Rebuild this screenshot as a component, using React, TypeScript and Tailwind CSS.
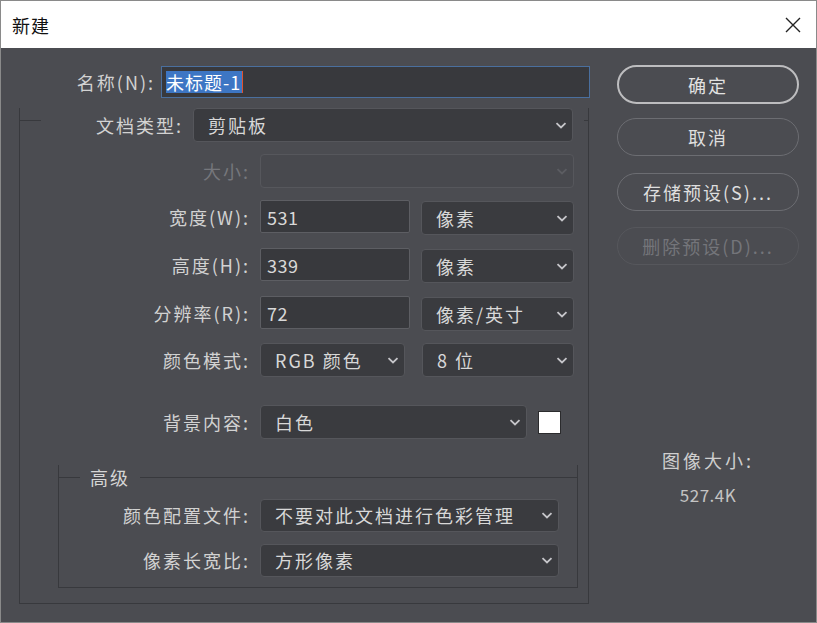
import React from 'react';

const font = "font-['Noto_Sans_CJK_SC',sans-serif]";

function Chevron({ dim }: { dim?: boolean }) {
  return (
    <svg
      width="12"
      height="7"
      viewBox="0 0 12 7"
      className={dim ? 'text-[#5c5d62]' : 'text-[#c6c6ca]'}
    >
      <polyline points="1.5,1.2 6,5.5 10.5,1.2" fill="none" stroke="currentColor" strokeWidth="1.8" />
    </svg>
  );
}

function Select({
  value,
  className,
  disabled,
}: {
  value?: string;
  className: string;
  disabled?: boolean;
}) {
  return (
    <div
      className={`flex items-center justify-between rounded-[4px] border pl-[14px] pr-[5px] ${
        disabled ? 'border-[#56575c] bg-[#48494e]' : 'border-[#55565b] bg-[#3a3b3f]'
      } ${className}`}
    >
      <span className="text-[18px] leading-[24px] tracking-[2px] text-[#d8d8d8]">{value}</span>
      <Chevron dim={disabled} />
    </div>
  );
}

function Field({ value, className }: { value: string; className: string }) {
  return (
    <div
      className={`flex items-center rounded-[2px] border border-[#5d5e63] bg-[#38393d] pl-[6px] ${className}`}
    >
      <span className="text-[18px] leading-[24px] tracking-[0.5px] text-[#d8d8d8]">{value}</span>
    </div>
  );
}

function Label({ text, className, disabled }: { text: string; className: string; disabled?: boolean }) {
  return (
    <div
      className={`flex h-[34px] items-center justify-end text-[18px] leading-[24px] tracking-[2px] ${
        disabled ? 'text-[#76777c]' : 'text-[#d2d2d2]'
      } ${className}`}
    >
      {text}
    </div>
  );
}

function PillButton({
  text,
  variant,
  className,
}: {
  text: string;
  variant: 'primary' | 'normal' | 'disabled';
  className: string;
}) {
  const styles = {
    primary: 'border-2 border-[#bdbdbf] text-[#e2e2e2]',
    normal: 'border-[1.5px] border-[#6c6d72] text-[#dedede]',
    disabled: 'border-[1.5px] border-[#56575c] text-[#74757a]',
  }[variant];
  return (
    <div
      className={`flex w-[182px] items-center justify-center rounded-full text-[18px] leading-[24px] tracking-[2px] ${styles} ${className}`}
    >
      {text}
    </div>
  );
}

export default function App() {
  return (
    <div className={`flex h-[623px] w-[817px] flex-col border border-[#8a8a8a] bg-[#4b4c51] ${font}`}>
      {/* title bar */}
      <div className="flex h-[47px] items-center justify-between bg-white pl-[11px] pr-[15px]">
        <span className="text-[18px] leading-[24px] tracking-[1px] text-[#111]">新建</span>
        <svg width="16" height="16" viewBox="0 0 16 16">
          <path d="M1 1 L15 15 M15 1 L1 15" stroke="#222" strokeWidth="1.4" fill="none" />
        </svg>
      </div>

      <div className="flex flex-1">
        {/* left column */}
        <div className="w-[589px]">
          <div className="mt-[18px] flex items-center">
            <div className="w-[154px] text-right text-[18px] leading-[24px] tracking-[2px] text-[#d2d2d2]">
              名称(N):
            </div>
            <div className="ml-[6px] flex h-[32px] w-[429px] items-center border border-[#4a6f9e] bg-[#38393d] pl-[4px]">
              <span className="bg-[#3d76c4] pr-[1px] text-[18px] leading-[22px] tracking-[1px] text-white">
                未标题-1
              </span>
              <span className="h-[22px] w-px bg-[#e0522e]" />
            </div>
          </div>

          {/* main group */}
          <div className="ml-[18px] mt-[22px] w-[570px] border-x border-b border-[#38393d] pb-[15px]">
            <div className="-mt-[12px] flex items-start">
              <div className="mt-[12px] h-px w-[21px] bg-[#38393d]" />
              <Label text="文档类型:" className="w-[142px]" />
              <Select value="剪贴板" className="ml-[10px] h-[34px] w-[380px]" />
              <div className="ml-[11px] mt-[12px] h-px w-[4px] bg-[#38393d]" />
            </div>

            <div className="mt-[12px] flex">
              <Label text="大小:" className="w-[230px]" disabled />
              <Select className="ml-[10px] h-[34px] w-[314px]" disabled />
            </div>

            <div className="mt-[12px] flex items-start">
              <Label text="宽度(W):" className="w-[230px]" />
              <Field value="531" className="ml-[10px] h-[33px] w-[150px]" />
              <Select value="像素" className="ml-[11px] mt-[1px] h-[34px] w-[153px]" />
            </div>

            <div className="mt-[13px] flex items-start">
              <Label text="高度(H):" className="w-[230px]" />
              <Field value="339" className="ml-[10px] h-[33px] w-[150px]" />
              <Select value="像素" className="ml-[11px] mt-[1px] h-[34px] w-[153px]" />
            </div>

            <div className="mt-[13px] flex items-start">
              <Label text="分辨率(R):" className="w-[230px]" />
              <Field value="72" className="ml-[10px] h-[33px] w-[150px]" />
              <Select value="像素/英寸" className="ml-[11px] mt-[1px] h-[34px] w-[153px]" />
            </div>

            <div className="mt-[12px] flex">
              <Label text="颜色模式:" className="w-[230px]" />
              <Select value="RGB 颜色" className="ml-[10px] h-[34px] w-[145px]" />
              <Select value="8 位" className="ml-[17px] h-[34px] w-[152px]" />
            </div>

            <div className="mt-[28px] flex items-center">
              <Label text="背景内容:" className="w-[230px]" />
              <Select value="白色" className="ml-[10px] h-[34px] w-[267px]" />
              <div className="ml-[11px] h-[23px] w-[23px] border border-[#2b2b2d] bg-white" />
            </div>

            {/* advanced group */}
            <div className="ml-[38px] mt-[38px] w-[520px] border-x border-b border-[#38393d] pb-[10px]">
              <div className="-mt-[12px] flex items-start">
                <div className="mt-[12px] h-px w-[21px] bg-[#38393d]" />
                <span className="ml-[10px] text-[18px] leading-[24px] tracking-[2px] text-[#d6d6d6]">高级</span>
                <div className="ml-[10px] mt-[12px] h-px flex-1 bg-[#38393d]" />
              </div>
              <div className="mt-[9px] flex items-center">
                <Label text="颜色配置文件:" className="w-[191px]" />
                <Select value="不要对此文档进行色彩管理" className="ml-[10px] h-[33px] w-[299px]" />
              </div>
              <div className="mt-[11px] flex items-center">
                <Label text="像素长宽比:" className="w-[191px]" />
                <Select value="方形像素" className="ml-[10px] h-[33px] w-[299px]" />
              </div>
            </div>
          </div>
        </div>

        {/* right column */}
        <div className="ml-[27px] flex w-[182px] flex-col">
          <PillButton text="确定" variant="primary" className="mt-[17px] h-[39px]" />
          <PillButton text="取消" variant="normal" className="mt-[14px] h-[38px]" />
          <PillButton text="存储预设(S)..." variant="normal" className="mt-[17px] h-[38px]" />
          <PillButton text="删除预设(D)..." variant="disabled" className="mt-[16px] h-[38px]" />
          <div className="mt-[183px] text-center text-[18px] leading-[24px] tracking-[3px] text-[#cfcfcf]">
            图像大小:
          </div>
          <div className="mt-[11px] text-center text-[17px] leading-[24px] tracking-[0.5px] text-[#c4c4c4]">
            527.4K
          </div>
        </div>
      </div>
    </div>
  );
}
